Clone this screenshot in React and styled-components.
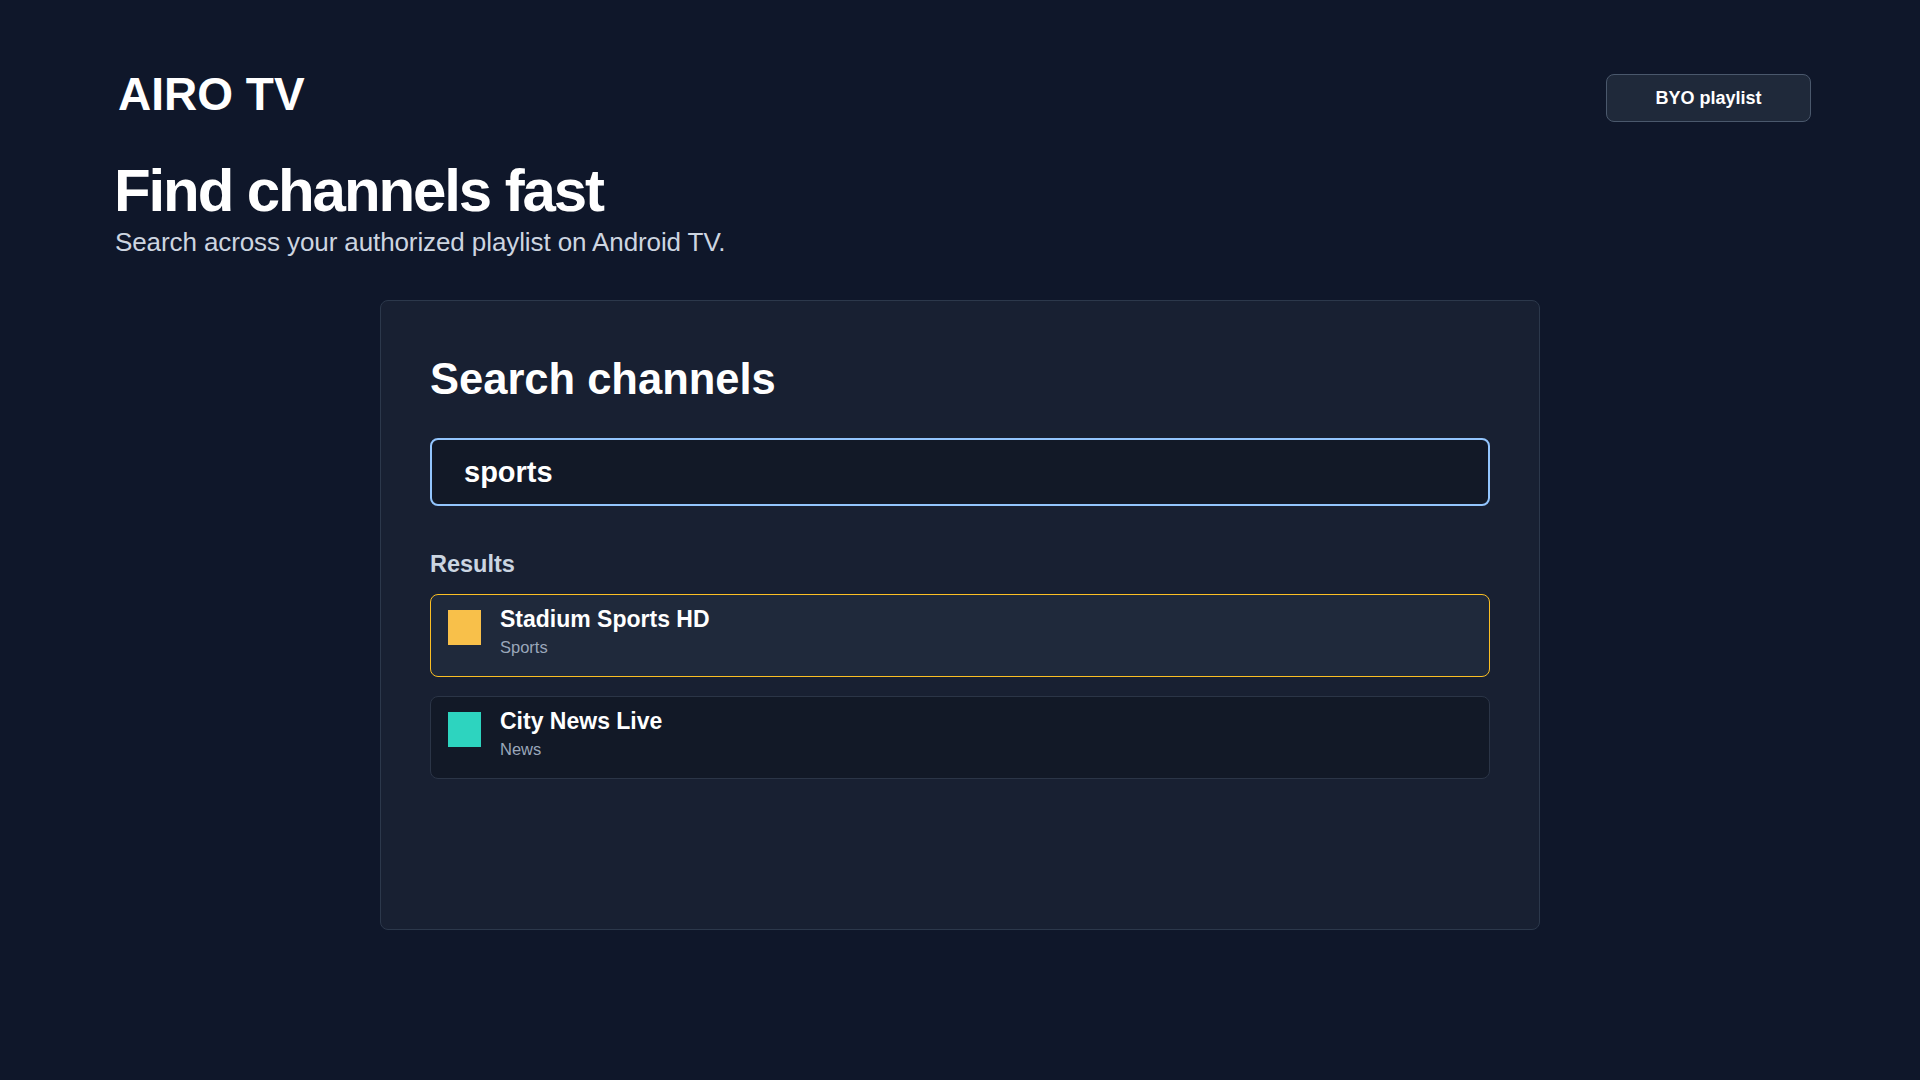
import React from 'react'
import styled, { createGlobalStyle } from 'styled-components'

const GlobalStyle = createGlobalStyle`
  html, body {
    margin: 0;
    padding: 0;
    background: #0f172a;
  }
  body {
    font-family: 'Liberation Sans', Arial, sans-serif;
    color: #ffffff;
    min-height: 1080px;
  }
  * {
    box-sizing: border-box;
  }
`

const Page = styled.main`
  min-height: 1080px;
  padding: 71px 109px 0 114px;
  display: flex;
  flex-direction: column;
`

const TopBar = styled.header`
  display: flex;
  justify-content: space-between;
  align-items: flex-start;
`

const Logo = styled.div`
  font-size: 46px;
  font-weight: 700;
  line-height: 46px;
  margin-left: 4px;
`

const PlaylistButton = styled.button`
  margin-top: 3px;
  width: 205px;
  height: 48px;
  border-radius: 8px;
  border: 1px solid #4a586c;
  background: #1f293a;
  color: #ffffff;
  font-family: 'Liberation Sans', Arial, sans-serif;
  font-size: 18px;
  font-weight: 700;
  cursor: pointer;
`

const Hero = styled.section`
  margin-top: 39px;
  display: flex;
  flex-direction: column;
  gap: 6px;
`

const Title = styled.h1`
  margin: 0;
  font-size: 60px;
  line-height: 60px;
  font-weight: 700;
  letter-spacing: -0.035em;
`

const Lead = styled.p`
  margin: 0;
  font-size: 26px;
  line-height: 31px;
  color: #cdd5e0;
  letter-spacing: -0.1px;
  padding-left: 1px;
`

const Panel = styled.section`
  align-self: center;
  margin: 42px 0 0 -5px;
  width: 1160px;
  height: 630px;
  padding: 52px 49px 49px;
  background: #182032;
  border: 1px solid #2c384b;
  border-radius: 8px;
  display: flex;
  flex-direction: column;
`

const PanelTitle = styled.h2`
  margin: 0;
  font-size: 43.5px;
  line-height: 1.2;
  font-weight: 700;
`

const SearchInput = styled.input`
  margin-top: 33px;
  width: 100%;
  height: 68px;
  padding: 0 32px;
  border: 2px solid #93c5fd;
  border-radius: 8px;
  background: #121927;
  color: #ffffff;
  font-family: 'Liberation Sans', Arial, sans-serif;
  font-size: 29px;
  font-weight: 700;
  outline: none;
`

const SectionLabel = styled.h3`
  margin: 44px 0 0;
  font-size: 23.5px;
  line-height: 1.2;
  font-weight: 700;
  color: #cbd5e1;
`

const ResultList = styled.ul`
  list-style: none;
  margin: 16px 0 0;
  padding: 0;
  display: flex;
  flex-direction: column;
  gap: 19px;
`

const ResultCard = styled.li`
  height: 83px;
  padding: 11px 17px;
  display: flex;
  align-items: flex-start;
  gap: 18px;
  border-radius: 8px;
  border: 1px solid ${p => (p.$active ? '#fbbf24' : '#2b3547')};
  background: ${p => (p.$active ? '#1f293b' : '#121927')};
`

const Swatch = styled.span`
  flex: none;
  margin-top: 4px;
  width: 33px;
  height: 35px;
  background: ${p => p.$color};
`

const CardText = styled.div`
  display: flex;
  flex-direction: column;
  gap: 3px;
  padding-left: 1px;
`

const ChannelName = styled.div`
  font-size: 23px;
  line-height: 1.2;
  font-weight: 700;
`

const ChannelGroup = styled.div`
  font-size: 16.5px;
  line-height: 1.3;
  color: #9aa7ba;
`

const results = [
  { name: 'Stadium Sports HD', group: 'Sports', color: '#f8c04a', active: true },
  { name: 'City News Live', group: 'News', color: '#2dd4bf', active: false }
]

const App = () => {
  return (
    <>
      <GlobalStyle />
      <Page>
        <TopBar>
          <Logo>AIRO TV</Logo>
          <PlaylistButton>BYO playlist</PlaylistButton>
        </TopBar>
        <Hero>
          <Title>Find channels fast</Title>
          <Lead>Search across your authorized playlist on Android TV.</Lead>
        </Hero>
        <Panel>
          <PanelTitle>Search channels</PanelTitle>
          <SearchInput defaultValue="sports" />
          <SectionLabel>Results</SectionLabel>
          <ResultList>
            {results.map(r => (
              <ResultCard key={r.name} $active={r.active}>
                <Swatch $color={r.color} />
                <CardText>
                  <ChannelName>{r.name}</ChannelName>
                  <ChannelGroup>{r.group}</ChannelGroup>
                </CardText>
              </ResultCard>
            ))}
          </ResultList>
        </Panel>
      </Page>
    </>
  )
}

export default App
